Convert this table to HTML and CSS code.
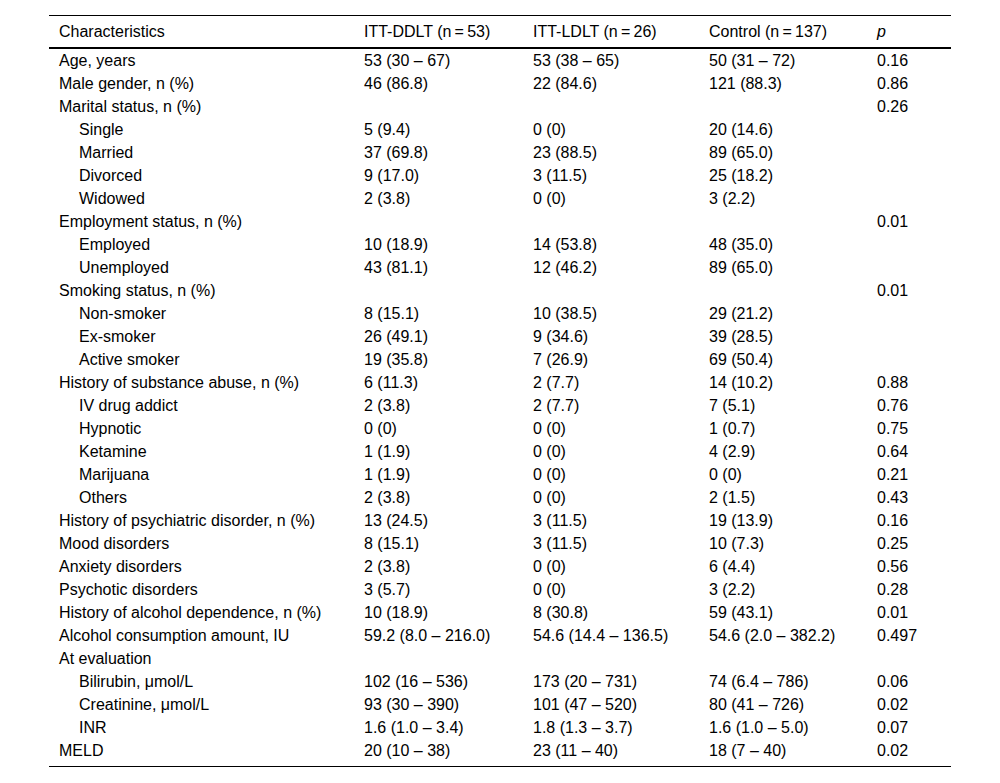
FILE: index.html
```html
<!DOCTYPE html>
<html>
<head>
<meta charset="utf-8">
<link rel="stylesheet" href="styles.css">
</head>
<body>
<div class="page">
<table class="tbl">
<colgroup>
<col class="c1"><col class="c2"><col class="c3"><col class="c4"><col class="c5">
</colgroup>
<thead>
<tr><th>Characteristics</th><th>ITT-DDLT (n&#8201;=&#8201;53)</th><th>ITT-LDLT (n&#8201;=&#8201;26)</th><th>Control (n&#8201;=&#8201;137)</th><th><i>p</i></th></tr>
</thead>
<tbody>
<tr><td>Age, years</td><td>53 (30 – 67)</td><td>53 (38 – 65)</td><td>50 (31 – 72)</td><td>0.16</td></tr>
<tr><td>Male gender, n (%)</td><td>46 (86.8)</td><td>22 (84.6)</td><td>121 (88.3)</td><td>0.86</td></tr>
<tr><td>Marital status, n (%)</td><td></td><td></td><td></td><td>0.26</td></tr>
<tr><td class="ind">Single</td><td>5 (9.4)</td><td>0 (0)</td><td>20 (14.6)</td><td></td></tr>
<tr><td class="ind">Married</td><td>37 (69.8)</td><td>23 (88.5)</td><td>89 (65.0)</td><td></td></tr>
<tr><td class="ind">Divorced</td><td>9 (17.0)</td><td>3 (11.5)</td><td>25 (18.2)</td><td></td></tr>
<tr><td class="ind">Widowed</td><td>2 (3.8)</td><td>0 (0)</td><td>3 (2.2)</td><td></td></tr>
<tr><td>Employment status, n (%)</td><td></td><td></td><td></td><td>0.01</td></tr>
<tr><td class="ind">Employed</td><td>10 (18.9)</td><td>14 (53.8)</td><td>48 (35.0)</td><td></td></tr>
<tr><td class="ind">Unemployed</td><td>43 (81.1)</td><td>12 (46.2)</td><td>89 (65.0)</td><td></td></tr>
<tr><td>Smoking status, n (%)</td><td></td><td></td><td></td><td>0.01</td></tr>
<tr><td class="ind">Non-smoker</td><td>8 (15.1)</td><td>10 (38.5)</td><td>29 (21.2)</td><td></td></tr>
<tr><td class="ind">Ex-smoker</td><td>26 (49.1)</td><td>9 (34.6)</td><td>39 (28.5)</td><td></td></tr>
<tr><td class="ind">Active smoker</td><td>19 (35.8)</td><td>7 (26.9)</td><td>69 (50.4)</td><td></td></tr>
<tr><td>History of substance abuse, n (%)</td><td>6 (11.3)</td><td>2 (7.7)</td><td>14 (10.2)</td><td>0.88</td></tr>
<tr><td class="ind">IV drug addict</td><td>2 (3.8)</td><td>2 (7.7)</td><td>7 (5.1)</td><td>0.76</td></tr>
<tr><td class="ind">Hypnotic</td><td>0 (0)</td><td>0 (0)</td><td>1 (0.7)</td><td>0.75</td></tr>
<tr><td class="ind">Ketamine</td><td>1 (1.9)</td><td>0 (0)</td><td>4 (2.9)</td><td>0.64</td></tr>
<tr><td class="ind">Marijuana</td><td>1 (1.9)</td><td>0 (0)</td><td>0 (0)</td><td>0.21</td></tr>
<tr><td class="ind">Others</td><td>2 (3.8)</td><td>0 (0)</td><td>2 (1.5)</td><td>0.43</td></tr>
<tr><td>History of psychiatric disorder, n (%)</td><td>13 (24.5)</td><td>3 (11.5)</td><td>19 (13.9)</td><td>0.16</td></tr>
<tr><td>Mood disorders</td><td>8 (15.1)</td><td>3 (11.5)</td><td>10 (7.3)</td><td>0.25</td></tr>
<tr><td>Anxiety disorders</td><td>2 (3.8)</td><td>0 (0)</td><td>6 (4.4)</td><td>0.56</td></tr>
<tr><td>Psychotic disorders</td><td>3 (5.7)</td><td>0 (0)</td><td>3 (2.2)</td><td>0.28</td></tr>
<tr><td>History of alcohol dependence, n (%)</td><td>10 (18.9)</td><td>8 (30.8)</td><td>59 (43.1)</td><td>0.01</td></tr>
<tr><td>Alcohol consumption amount, IU</td><td>59.2 (8.0 – 216.0)</td><td>54.6 (14.4 – 136.5)</td><td>54.6 (2.0 – 382.2)</td><td>0.497</td></tr>
<tr><td>At evaluation</td><td></td><td></td><td></td><td></td></tr>
<tr><td class="ind">Bilirubin, μmol/L</td><td>102 (16 – 536)</td><td>173 (20 – 731)</td><td>74 (6.4 – 786)</td><td>0.06</td></tr>
<tr><td class="ind">Creatinine, μmol/L</td><td>93 (30 – 390)</td><td>101 (47 – 520)</td><td>80 (41 – 726)</td><td>0.02</td></tr>
<tr><td class="ind">INR</td><td>1.6 (1.0 – 3.4)</td><td>1.8 (1.3 – 3.7)</td><td>1.6 (1.0 – 5.0)</td><td>0.07</td></tr>
<tr class="last"><td>MELD</td><td>20 (10 – 38)</td><td>23 (11 – 40)</td><td>18 (7 – 40)</td><td>0.02</td></tr>
</tbody>
</table>
</div>
</body>
</html>
```
FILE: styles.css
```css
html, body {
  margin: 0;
  padding: 0;
  background: #fff;
}
.page {
  padding: 15px 49px 0 49px;
}
.tbl {
  width: 902px;
  border-collapse: collapse;
  table-layout: fixed;
  font-family: "Liberation Sans", Arial, sans-serif;
  font-size: 16px;
  color: #000;
  border-top: 1px solid #000;
  border-bottom: 1px solid #000;
}
.c1 { width: 305px; }
.c2 { width: 169px; }
.c3 { width: 176px; }
.c4 { width: 168px; }
.c5 { width: 84px; }
.tbl th {
  font-weight: normal;
  text-align: left;
  height: 31px;
  padding: 0 0 0 10px;
  border-bottom: 2px solid #000;
  line-height: 31px;
  white-space: nowrap;
}
.tbl td {
  height: 23px;
  line-height: 23px;
  padding: 0 0 0 10px;
  white-space: nowrap;
}
.tbl td.ind {
  padding-left: 30px;
}
.tbl tr.last td {
  height: 27px;
  line-height: 23px;
  vertical-align: top;
}
```
